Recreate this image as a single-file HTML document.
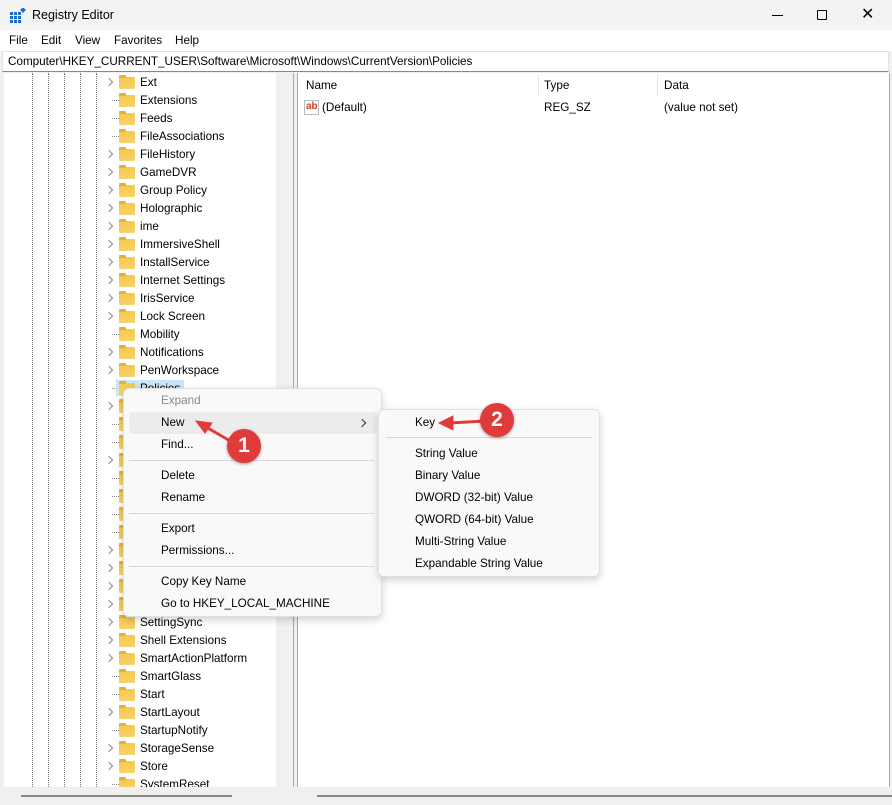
<!DOCTYPE html>
<html><head><style>
*{margin:0;padding:0;box-sizing:border-box}
body{width:892px;height:805px;overflow:hidden;background:#f0f0f0;font-family:"Liberation Sans",sans-serif;font-size:11.7px;color:#000;position:relative}
.a{position:absolute;white-space:nowrap}
.row{position:absolute;left:0;height:18px;line-height:18px}
.fold{position:absolute;left:119px;width:16px;height:12px;background:linear-gradient(#f7c84a,#f5d36e);border-radius:1px}
.fold:before{content:"";position:absolute;left:0;top:-2px;width:7px;height:3px;background:#e9b033;border-radius:1px 1px 0 0}
.chev{position:absolute;left:106px;width:6px;height:6px;border-right:1.3px solid #888;border-top:1.3px solid #888;transform:rotate(45deg)}
.dot{position:absolute;left:112px;width:7px;border-top:1px dotted #888}
.vl{position:absolute;top:73px;height:714px;border-left:1px dotted #777}
.mi{position:absolute;font-size:11.7px}
.sep{position:absolute;height:1px;background:#d8d8d8}
.badge{position:absolute;width:34px;height:34px;border-radius:50%;background:#e03b3b;color:#fff;font-weight:bold;font-size:21px;text-align:center;line-height:34px;box-shadow:0 1px 3px rgba(0,0,0,.4)}
</style></head><body>
<div class="a" style="left:0;top:0;width:892px;height:30px;background:#f3f3f3"></div>
<svg class="a" style="left:10px;top:8px" width="16" height="16"><g fill="#1a6fc0"><rect x="0" y="4" width="3" height="3"/><rect x="4" y="4" width="3" height="3"/><rect x="8" y="4" width="3" height="3"/><rect x="0" y="8" width="3" height="3"/><rect x="4" y="8" width="3" height="3"/><rect x="8" y="8" width="3" height="3"/><rect x="0" y="12" width="3" height="3"/><rect x="4" y="12" width="3" height="3"/><rect x="8" y="12" width="3" height="3"/><rect x="11" y="0" width="4" height="4" transform="rotate(45 13 2)"/></g></svg>
<div class="a" style="left:32px;top:8px;font-size:12.5px">Registry Editor</div>
<div class="a" style="left:772px;top:15px;width:11px;height:1px;background:#000"></div>
<div class="a" style="left:817px;top:10px;width:10px;height:10px;border:1px solid #000;border-radius:1px"></div>
<div class="a" style="left:861px;top:7px;font-size:16px;line-height:16px">✕</div>
<div class="a" style="left:0;top:30px;width:892px;height:21px;background:#fff"></div>
<div class="a" style="left:9px;top:34px">File</div>
<div class="a" style="left:41px;top:34px">Edit</div>
<div class="a" style="left:75px;top:34px">View</div>
<div class="a" style="left:114px;top:34px">Favorites</div>
<div class="a" style="left:175px;top:34px">Help</div>
<div class="a" style="left:2px;top:51px;width:887px;height:21px;background:#fff;border:1px solid #e2e2e2;border-bottom:1px solid #888"></div>
<div class="a" style="left:8px;top:55px">Computer\HKEY_CURRENT_USER\Software\Microsoft\Windows\CurrentVersion\Policies</div>
<div class="a" style="left:4px;top:73px;width:272px;height:714px;background:#fff"></div>
<div class="a" style="left:276px;top:73px;width:16px;height:714px;background:#f0f0f0"></div>
<div class="a" style="left:293px;top:73px;width:1px;height:732px;background:#aaa"></div>
<div class="a" style="left:297px;top:73px;width:1px;height:732px;background:#aaa"></div>
<div class="a" style="left:298px;top:73px;width:591px;height:714px;background:#fff"></div>
<div class="a" style="left:889px;top:73px;width:1px;height:732px;background:#aaa"></div>
<div class="vl" style="left:32px"></div><div class="vl" style="left:48px"></div><div class="vl" style="left:64px"></div><div class="vl" style="left:80px"></div><div class="vl" style="left:96px"></div>
<div id="tree"></div>
<div class="a" style="left:0;top:787px;width:892px;height:18px;background:#f0f0f0"></div>
<div class="a" style="left:21px;top:795px;width:211px;height:2px;background:#888"></div>
<div class="a" style="left:317px;top:795px;width:575px;height:2px;background:#888"></div>
<div class="a" style="left:306px;top:79px">Name</div>
<div class="a" style="left:538px;top:75px;width:1px;height:22px;background:#e5e5e5"></div>
<div class="a" style="left:544px;top:79px">Type</div>
<div class="a" style="left:657px;top:75px;width:1px;height:22px;background:#e5e5e5"></div>
<div class="a" style="left:664px;top:79px">Data</div>
<div class="a" style="left:304px;top:100px;width:15px;height:15px;border:1px solid #bbb;background:#fff;color:#d04020;font-size:10px;font-weight:bold;line-height:11px;padding-left:1px">ab</div>
<div class="a" style="left:322px;top:101px">(Default)</div>
<div class="a" style="left:544px;top:101px">REG_SZ</div>
<div class="a" style="left:664px;top:101px">(value not set)</div>
<div class="a" style="left:123px;top:388px;width:259px;height:229px;background:#f9f9f9;border:1px solid #e0e0e0;border-radius:6px;box-shadow:0 3px 8px rgba(0,0,0,.18)"></div>
<div class="a" style="left:129px;top:412px;width:248px;height:22px;background:#ececec;border-radius:4px"></div>
<div class="mi a" style="left:161px;top:394px;color:#8a8a8a">Expand</div>
<div class="mi a" style="left:161px;top:416px">New</div>
<div class="a" style="left:359px;top:420px;width:6px;height:6px;border-right:1.2px solid #333;border-top:1.2px solid #333;transform:rotate(45deg)"></div>
<div class="mi a" style="left:161px;top:438px">Find...</div>
<div class="sep" style="left:129px;top:460px;width:245px"></div>
<div class="mi a" style="left:161px;top:469px">Delete</div>
<div class="mi a" style="left:161px;top:491px">Rename</div>
<div class="sep" style="left:129px;top:513px;width:245px"></div>
<div class="mi a" style="left:161px;top:522px">Export</div>
<div class="mi a" style="left:161px;top:544px">Permissions...</div>
<div class="sep" style="left:129px;top:566px;width:245px"></div>
<div class="mi a" style="left:161px;top:575px">Copy Key Name</div>
<div class="mi a" style="left:161px;top:597px">Go to HKEY_LOCAL_MACHINE</div>
<div class="a" style="left:378px;top:409px;width:222px;height:168px;background:#f9f9f9;border:1px solid #e0e0e0;border-radius:6px;box-shadow:0 3px 8px rgba(0,0,0,.18)"></div>
<div class="mi a" style="left:415px;top:416px">Key</div>
<div class="sep" style="left:386px;top:437px;width:206px"></div>
<div class="mi a" style="left:415px;top:447px">String Value</div>
<div class="mi a" style="left:415px;top:469px">Binary Value</div>
<div class="mi a" style="left:415px;top:491px">DWORD (32-bit) Value</div>
<div class="mi a" style="left:415px;top:513px">QWORD (64-bit) Value</div>
<div class="mi a" style="left:415px;top:535px">Multi-String Value</div>
<div class="mi a" style="left:415px;top:557px">Expandable String Value</div>
<svg class="a" style="left:0;top:0" width="892" height="805">
<g stroke="#e03b3b" stroke-width="3" fill="#e03b3b" stroke-linecap="round">
<line x1="232" y1="442" x2="206" y2="427"/>
<polygon points="196,421 212,423 205,433" stroke-width="1"/>
<line x1="485" y1="421" x2="450" y2="423"/>
<polygon points="439,423 453,416 453,430" stroke-width="1"/>
</g></svg>
<div class="badge" style="left:227px;top:429px">1</div>
<div class="badge" style="left:480px;top:403px">2</div>
<script>
var names=["Ext","Extensions","Feeds","FileAssociations","FileHistory","GameDVR","Group Policy","Holographic","ime","ImmersiveShell","InstallService","Internet Settings","IrisService","Lock Screen","Mobility","Notifications","PenWorkspace","Policies","","","","","","","","","","","","","SettingSync","Shell Extensions","SmartActionPlatform","SmartGlass","Start","StartLayout","StartupNotify","StorageSense","Store","SystemReset"];
var chev=[1,0,0,0,1,1,1,1,1,1,1,1,1,1,0,1,1,0,1,0,0,1,0,0,0,0,1,1,1,1,1,1,1,0,0,1,0,1,1,0];
var h="";
for(var i=0;i<names.length;i++){var t=73+i*18;
if(t>780)break;
h+= chev[i]?'<div class="chev" style="top:'+(t+6)+'px"></div>':'<div class="dot" style="top:'+(t+9)+'px"></div>';
h+='<div class="fold" style="top:'+(t+4)+'px"></div>';
if(i==17)h+='<div class="a" style="left:116px;top:'+(t+1)+'px;width:68px;height:16px;background:#cce4f7"></div><div class="fold" style="top:'+(t+4)+'px"></div>';
if(names[i])h+='<div class="row" style="left:140px;top:'+(t+1)+'px">'+names[i]+'</div>';}
document.getElementById("tree").innerHTML=h;
</script>
</body></html>
